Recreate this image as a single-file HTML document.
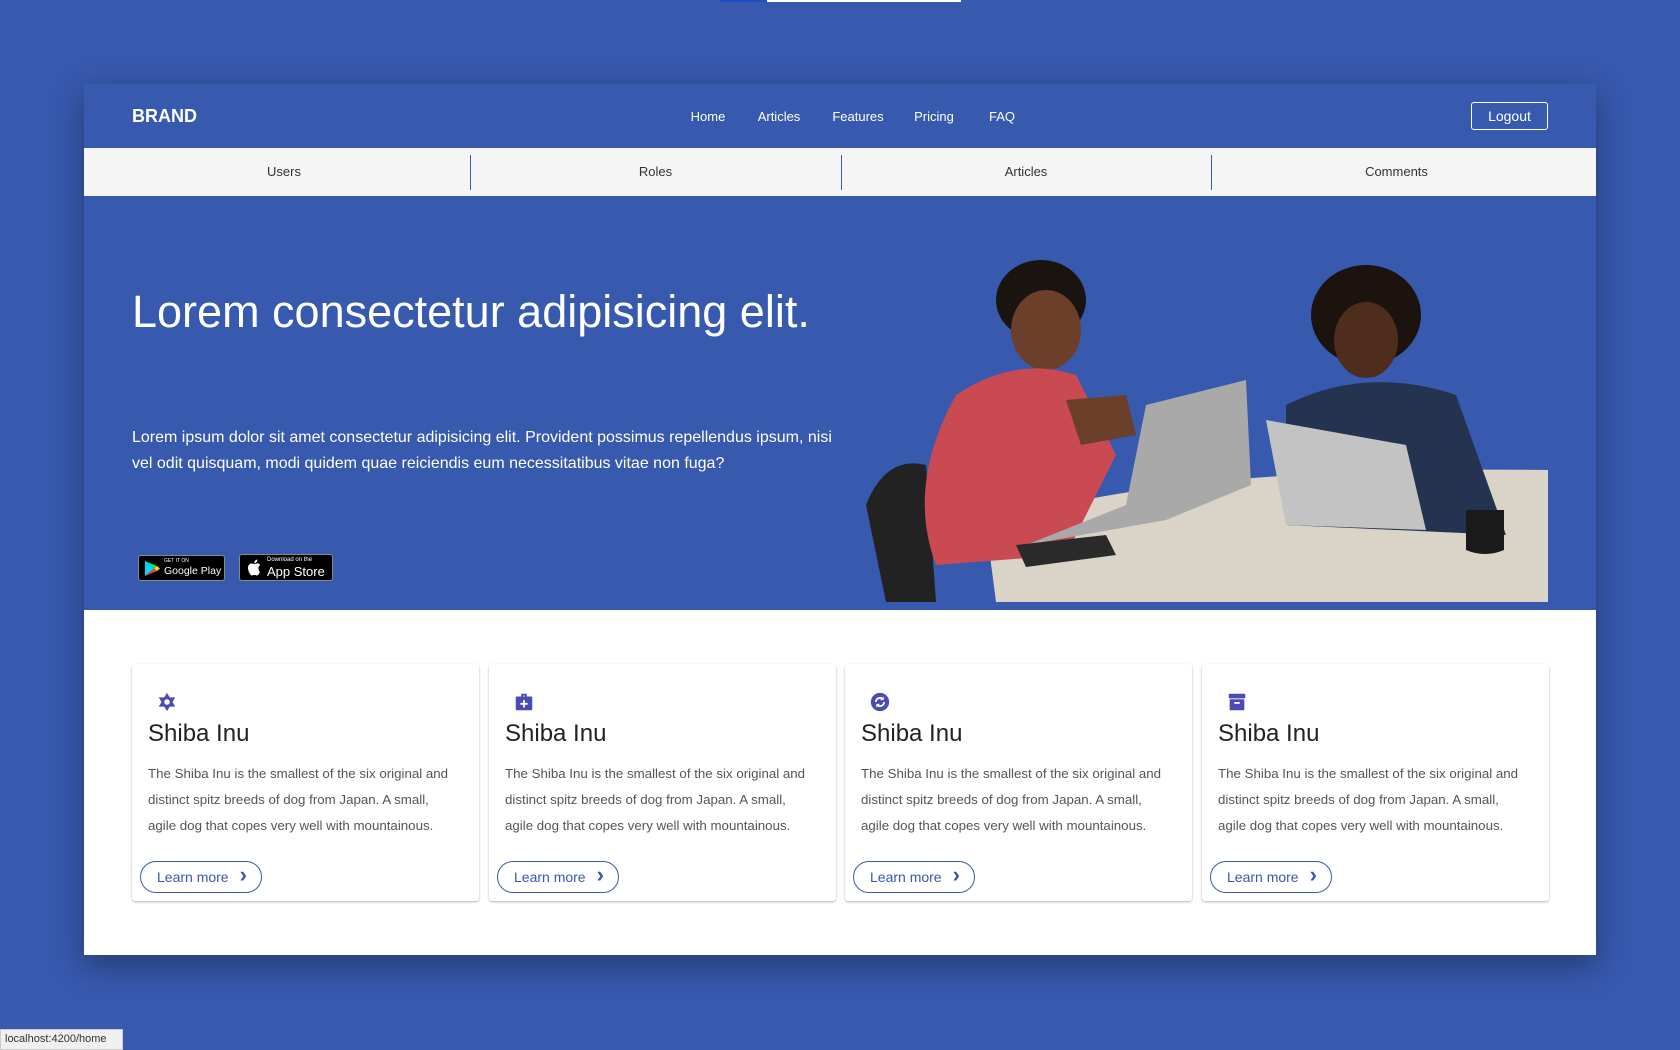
<!DOCTYPE html>
<html><head><meta charset="utf-8"><style>
*{box-sizing:border-box;margin:0;padding:0}
body{width:1680px;height:1050px;background:#3759ae;font-family:"Liberation Sans",sans-serif;position:relative;overflow:hidden}
.abs{position:absolute}
.panel{left:84px;top:84px;width:1512px;height:871px;background:#fff;box-shadow:0 10px 30px rgba(0,0,0,.35)}
.nav{left:0;top:0;width:1512px;height:64px;background:#3759ae;color:#fff}
.nav a{position:absolute;top:25px;font-size:13px;color:#fff;transform:translateX(-50%)}
.sub{left:0;top:64px;width:1512px;height:48px;background:#f5f5f5;display:flex}
.sub div{text-align:center;font-size:13px;color:#333;line-height:48px;position:relative}
.sub div+div:before{content:"";position:absolute;left:0;top:7px;height:35px;border-left:1px solid #3759ae}
.hero{left:0;top:112px;width:1512px;height:414px;background:#3759ae;color:#fff}
.card{width:347px;height:237px;top:580px;background:#fff;box-shadow:0 1px 2px rgba(0,0,0,.3);border-radius:3px}
.card h3{position:absolute;left:16px;top:56px;font-size:24px;font-weight:normal;color:#222}
.card p{position:absolute;left:16px;top:97px;width:330px;white-space:nowrap;font-size:13.3px;line-height:26px;color:#555}
.btn{position:absolute;left:8px;top:197px;width:122px;height:32px;border:1px solid #3759ae;border-radius:16px;color:#3759ae;font-size:14px;line-height:30px;padding-left:16px}
.btn:after{content:"›";position:absolute;right:14px;top:-2px;font-size:22px;font-weight:bold}
.ic{position:absolute;left:24px;top:27px}
</style></head><body>
<div class="abs" style="left:720px;top:0;width:47px;height:2px;background:#1e4fc8"></div>
<div class="abs" style="left:767px;top:0;width:194px;height:2px;background:#fff"></div>
<div class="abs panel">
 <div class="abs nav">
  <div class="abs" style="left:48px;top:22px;font-size:18px;font-weight:bold">BRAND</div>
  <a style="left:624px">Home</a><a style="left:695px">Articles</a><a style="left:774px">Features</a><a style="left:850px">Pricing</a><a style="left:918px">FAQ</a>
  <div class="abs" style="left:1387px;top:18px;width:77px;height:28px;border:1px solid #fff;border-radius:3px;font-size:14px;text-align:center;line-height:26px">Logout</div>
 </div>
 <div class="abs sub"><div style="width:386px;padding-left:14px">Users</div><div style="width:371px">Roles</div><div style="width:370px">Articles</div><div style="width:385px;padding-right:14px">Comments</div></div>
 <div class="abs hero">
  <div class="abs" style="left:48px;top:90px;font-size:45px;white-space:nowrap">Lorem consectetur adipisicing elit.</div>
  <div class="abs" style="left:48px;top:229px;width:720px;font-size:16px;line-height:26px">Lorem ipsum dolor sit amet consectetur adipisicing elit. Provident possimus repellendus ipsum, nisi vel odit quisquam, modi quidem quae reiciendis eum necessitatibus vitae non fuga?</div>
  <div class="abs" style="left:54px;top:359px;width:87px;height:26px;background:#000;border:1px solid #888;border-radius:3px">
   <svg class="abs" style="left:5px;top:4px" width="16" height="17" viewBox="0 0 16 17"><path d="M1 1L10 8.5 1 16z" fill="#00d7fe"/><path d="M1 1l9 7.5 3-2.5z" fill="#00f076"/><path d="M1 16l9-7.5 3 2.5z" fill="#f33a50"/><path d="M10 8.5l3-2.5 3 2.5-3 2.5z" fill="#ffd400"/></svg>
   <div class="abs" style="left:25px;top:2px;font-size:5px;color:#fff">GET IT ON</div>
   <div class="abs" style="left:25px;top:9px;font-size:10.5px;color:#fff">Google Play</div>
  </div>
  <div class="abs" style="left:155px;top:358px;width:94px;height:27px;background:#000;border:1px solid #888;border-radius:3px">
   <svg class="abs" style="left:7px;top:4px" width="14" height="17" viewBox="0 0 14 17"><path d="M11.5 9c0-2 1.6-2.9 1.7-3-1-1.4-2.4-1.6-2.9-1.6-1.2-.1-2.4.7-3 .7s-1.6-.7-2.6-.7C3.300 4.500 1 5.700 1 9c0 3 2.300 7.500 4 7.500.8 0 1.300-.6 2.400-.6 1 0 1.400.6 2.400.6 1.700 0 2.900-3 3.100-3.600-.1 0-1.400-.6-1.400-3.900zM9.600 3c.5-.7.900-1.600.8-2.500-.8 0-1.700.5-2.300 1.200-.5.600-.900 1.500-.8 2.400.9.100 1.700-.400 2.300-1.100z" fill="#fff"/></svg>
   <div class="abs" style="left:27px;top:2px;font-size:6px;color:#fff">Download on the</div>
   <div class="abs" style="left:27px;top:9px;font-size:13px;color:#fff">App Store</div>
  </div>
  <svg class="abs" style="left:782px;top:59px" width="682" height="347" viewBox="0 0 682 347">
   <path d="M120 270 Q300 210 682 215 L682 347 L130 347z" fill="#d9d3c8"/>
   <path d="M0 250 Q20 200 60 210 L70 347 L20 347z" fill="#222"/>
   <ellipse cx="175" cy="45" rx="45" ry="40" fill="#1a1410"/>
   <ellipse cx="180" cy="75" rx="35" ry="40" fill="#6b3f2a"/>
   <path d="M90 140 Q150 100 210 120 L250 200 L200 300 L70 310 Q40 230 90 140z" fill="#c94a52"/>
   <path d="M200 145 L260 140 L270 180 L215 190z" fill="#6b3f2a"/>
   <path d="M280 150 L380 125 L385 230 L300 265 L160 290 L260 250z" fill="#a9a9a9"/>
   <ellipse cx="500" cy="60" rx="55" ry="50" fill="#1d130e"/>
   <ellipse cx="500" cy="85" rx="32" ry="38" fill="#4e2d1d"/>
   <path d="M420 150 Q500 110 590 140 L640 280 L420 270z" fill="#233350"/>
   <path d="M400 165 L540 190 L560 275 L420 270z" fill="#c3c3c3"/>
   <path d="M150 290 L240 280 L250 300 L160 312z" fill="#2a2a2a"/>
   <path d="M600 255 h38 v40 q-19 8-38 0z" fill="#1a1a1a"/>
  </svg>
 </div>
 <div class="abs card" style="left:48px"><svg class="ic" width="22" height="22" viewBox="0 0 24 24"><path d="M12 2l3 5h6l-3 5 3 5h-6l-3 5-3-5H3l3-5-3-5h6z" fill="#4a4bb5"/><circle cx="12" cy="12" r="3" fill="#fff"/></svg><h3>Shiba Inu</h3><p>The Shiba Inu is the smallest of the six original and<br>distinct spitz breeds of dog from Japan. A small,<br>agile dog that copes very well with mountainous.</p><div class="btn">Learn more</div></div>
 <div class="abs card" style="left:405px"><svg class="ic" width="22" height="22" viewBox="0 0 24 24"><path d="M9 3h6v3h5a1 1 0 011 1v13a1 1 0 01-1 1H4a1 1 0 01-1-1V7a1 1 0 011-1h5zM11 5v1h2V5z" fill="#4a4bb5"/><path d="M11 10h2v3h3v2h-3v3h-2v-3H8v-2h3z" fill="#fff"/></svg><h3>Shiba Inu</h3><p>The Shiba Inu is the smallest of the six original and<br>distinct spitz breeds of dog from Japan. A small,<br>agile dog that copes very well with mountainous.</p><div class="btn">Learn more</div></div>
 <div class="abs card" style="left:761px"><svg class="ic" width="22" height="22" viewBox="0 0 24 24"><circle cx="12" cy="12" r="10" fill="#4a4bb5"/><path d="M7.5 12a4.5 4.5 0 018-2.8M16.5 12a4.5 4.5 0 01-8 2.8" stroke="#fff" stroke-width="2" fill="none"/><path d="M16 6v4h-4zM8 18v-4h4z" fill="#fff"/></svg><h3>Shiba Inu</h3><p>The Shiba Inu is the smallest of the six original and<br>distinct spitz breeds of dog from Japan. A small,<br>agile dog that copes very well with mountainous.</p><div class="btn">Learn more</div></div>
 <div class="abs card" style="left:1118px"><svg class="ic" width="22" height="22" viewBox="0 0 24 24"><rect x="3" y="3" width="18" height="5" rx="1" fill="#4a4bb5"/><rect x="4" y="9" width="16" height="12" rx="1" fill="#4a4bb5"/><rect x="9" y="12" width="6" height="2" fill="#fff"/></svg><h3>Shiba Inu</h3><p>The Shiba Inu is the smallest of the six original and<br>distinct spitz breeds of dog from Japan. A small,<br>agile dog that copes very well with mountainous.</p><div class="btn">Learn more</div></div>
</div>
<div class="abs" style="left:0;top:1029px;width:123px;height:21px;background:#f0f0f0;border:1px solid #ccc;font-size:11px;color:#333;line-height:19px;padding-left:4px">localhost:4200/home</div>
</body></html>
